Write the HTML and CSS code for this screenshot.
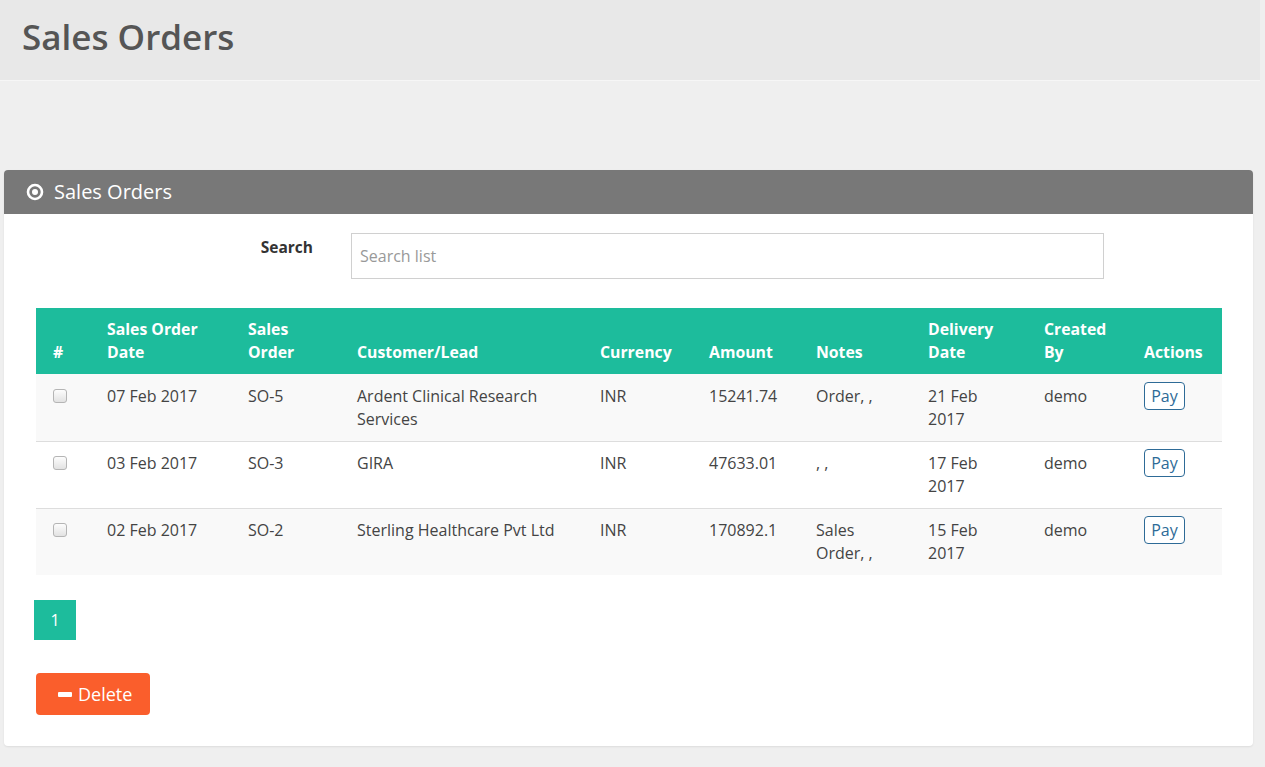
FILE: index.html
```html
<!DOCTYPE html>
<html lang="en">
<head>
<meta charset="utf-8">
<title>Sales Orders</title>
<link rel="stylesheet" href="styles.css">
</head>
<body>
<header class="page-header">
  <h1 class="page-title">Sales Orders</h1>
</header>
<main class="content">
  <section class="panel">
    <div class="panel-heading">
      <svg class="panel-icon" width="18" height="18" viewBox="0 0 18 18" aria-hidden="true">
        <circle cx="9" cy="9" r="7" fill="none" stroke="#fff" stroke-width="2.6"/>
        <circle cx="9" cy="9" r="3" fill="#fff"/>
      </svg>
      <span class="panel-title">Sales Orders</span>
    </div>
    <div class="panel-body">
      <div class="search-row">
        <label class="search-label" for="search">Search</label>
        <input id="search" class="search-input" type="text" placeholder="Search list">
      </div>
      <table class="orders">
        <colgroup>
          <col class="c-check"><col class="c-date"><col class="c-so"><col class="c-cust"><col class="c-cur">
          <col class="c-amt"><col class="c-notes"><col class="c-del"><col class="c-by"><col class="c-act">
        </colgroup>
        <thead>
          <tr>
            <th>#</th><th>Sales Order Date</th><th>Sales Order</th><th>Customer/Lead</th><th>Currency</th>
            <th>Amount</th><th>Notes</th><th>Delivery Date</th><th>Created By</th><th>Actions</th>
          </tr>
        </thead>
        <tbody>
          <tr>
            <td><input class="check" type="checkbox"></td>
            <td>07 Feb 2017</td><td>SO-5</td><td>Ardent Clinical Research Services</td><td>INR</td>
            <td>15241.74</td><td>Order, ,</td><td>21 Feb 2017</td><td>demo</td>
            <td><button class="btn-pay" type="button">Pay</button></td>
          </tr>
          <tr>
            <td><input class="check" type="checkbox"></td>
            <td>03 Feb 2017</td><td>SO-3</td><td>GIRA</td><td>INR</td>
            <td>47633.01</td><td>, ,</td><td>17 Feb 2017</td><td>demo</td>
            <td><button class="btn-pay" type="button">Pay</button></td>
          </tr>
          <tr>
            <td><input class="check" type="checkbox"></td>
            <td>02 Feb 2017</td><td>SO-2</td><td>Sterling Healthcare Pvt Ltd</td><td>INR</td>
            <td>170892.1</td><td>Sales Order, ,</td><td>15 Feb 2017</td><td>demo</td>
            <td><button class="btn-pay" type="button">Pay</button></td>
          </tr>
        </tbody>
      </table>
      <nav class="pagination">
        <span class="page-item active">1</span>
      </nav>
      <button class="btn-delete" type="button"><span class="minus"></span>Delete</button>
    </div>
  </section>
</main>
</body>
</html>
```

FILE: styles.css
```css
* { box-sizing: border-box; }

html, body {
  margin: 0;
  padding: 0;
}

body {
  background: #efefef;
  font-family: "Open Sans", "Liberation Sans", Arial, sans-serif;
  color: #444;
  min-height: 767px;
}

.page-header {
  height: 81px;
  background: #e8e8e8;
  border-bottom: 1px solid #f6f6f6;
  width: 1260px;
  padding: 14px 0 0 22px;
}

.page-title {
  margin: 0;
  font-size: 35px;
  line-height: 46px;
  font-weight: 600;
  color: #555;
}

.content {
  padding: 89px 12px 20px 4px;
}

.panel {
  width: 1249px;
  background: #fff;
  border-radius: 4px;
  box-shadow: 0 1px 2px rgba(0,0,0,0.08);
}

.panel-heading {
  height: 44px;
  background: #787878;
  border-radius: 4px 4px 0 0;
  display: flex;
  align-items: center;
  padding-left: 22px;
  color: #fff;
}

.panel-icon {
  flex: none;
  margin-right: 10px;
}

.panel-title {
  font-size: 20px;
  line-height: 26px;
}

.panel-body {
  padding: 19px 31px 31px 32px;
}

.search-row {
  display: flex;
  align-items: flex-start;
}

.search-label {
  width: 277px;
  text-align: right;
  font-size: 15.5px;
  font-weight: 700;
  color: #333;
  line-height: 21px;
  padding-top: 4px;
}

.search-input {
  margin-left: 38px;
  width: 753px;
  height: 46px;
  border: 1px solid #d0d0d0;
  padding: 0 8px;
  font-family: inherit;
  font-size: 16px;
  color: #555;
  outline: none;
}

.search-input::placeholder {
  color: #999;
}

.orders {
  margin-top: 29px;
  width: 1186px;
  table-layout: fixed;
  border-collapse: collapse;
  font-size: 16px;
}

.c-check { width: 54px; }
.c-date { width: 141px; }
.c-so { width: 109px; }
.c-cust { width: 243px; }
.c-cur { width: 109px; }
.c-amt { width: 107px; }
.c-notes { width: 112px; }
.c-del { width: 116px; }
.c-by { width: 100px; }
.c-act { width: 95px; }

.orders th {
  background: #1dbc9c;
  color: #fff;
  font-size: 15.8px;
  font-weight: 700;
  text-align: left;
  vertical-align: bottom;
  line-height: 23px;
  padding: 10px 10px 10px 17px;
}

.orders td {
  vertical-align: top;
  line-height: 23px;
  padding: 10px 12px 10px 17px;
  color: #444;
  border-top: 1px solid #dddddd;
}

.orders tbody tr:first-child td {
  border-top: none;
  padding-top: 11px;
}

.orders tbody tr:nth-child(odd) td {
  background: #f9f9f9;
}

.check {
  appearance: none;
  -webkit-appearance: none;
  display: block;
  width: 14px;
  height: 14px;
  margin: 4px 0 0 0;
  border: 1px solid #b5b5b5;
  border-radius: 3px;
  background: linear-gradient(#fdfdfd, #e2e2e2);
}

.btn-pay {
  display: block;
  margin-top: -3px;
  width: 41px;
  height: 28px;
  padding: 0;
  border: 1px solid #2e6b97;
  border-radius: 4px;
  background: #fff;
  color: #2e6b97;
  font-family: inherit;
  font-size: 16px;
  line-height: 24px;
}

.pagination {
  display: flex;
  margin: 25px 0 0 -2px;
}

.page-item {
  width: 42px;
  height: 40px;
  display: flex;
  align-items: center;
  justify-content: center;
  font-size: 16px;
  color: #fff;
}

.page-item.active {
  background: #1dbc9c;
}

.btn-delete {
  margin-top: 33px;
  width: 114px;
  height: 42px;
  border: none;
  border-radius: 4px;
  background: #fa5e2c;
  color: #fff;
  font-family: inherit;
  font-size: 18px;
  display: flex;
  align-items: center;
  padding: 0 0 0 22px;
}

.minus {
  display: inline-block;
  width: 14px;
  height: 5px;
  background: #fff;
  border-radius: 1px;
  margin-right: 6px;
}
```
